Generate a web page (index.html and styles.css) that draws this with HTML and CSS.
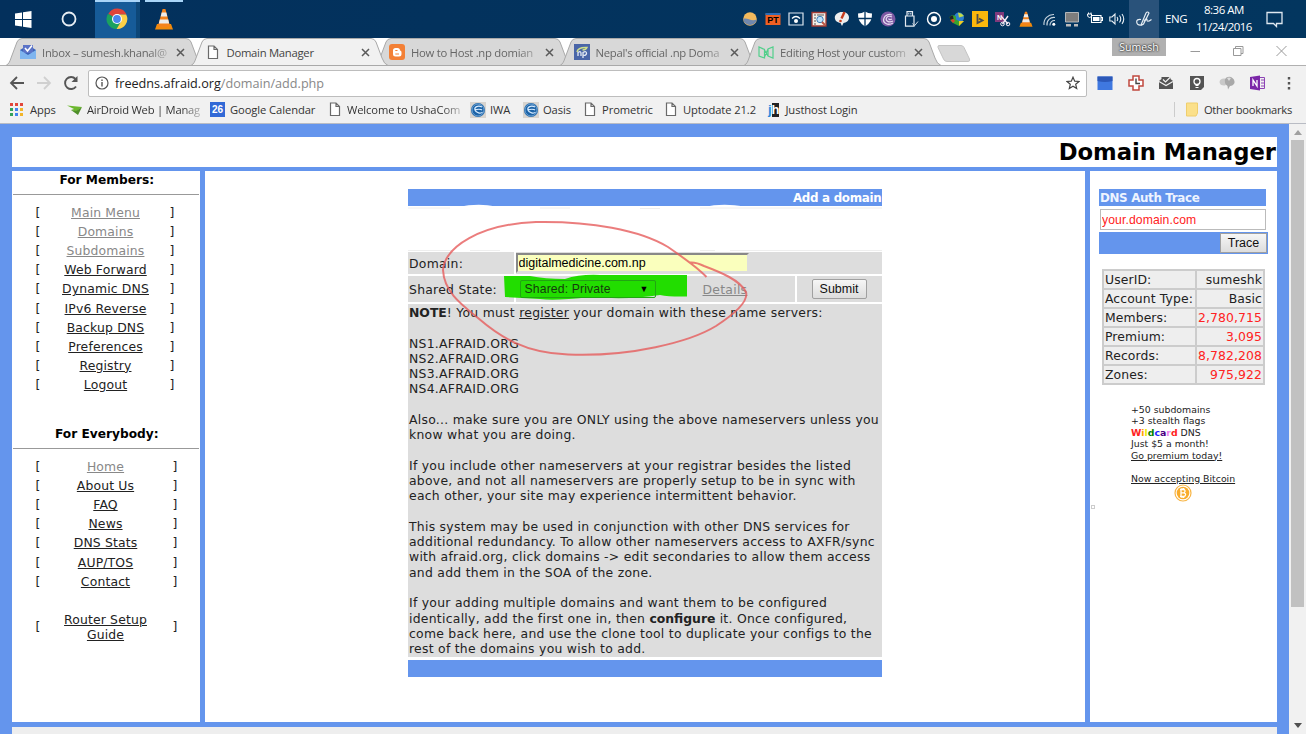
FILE: index.html
```html
<!DOCTYPE html>
<html lang="en">
<head>
  <meta charset="UTF-8">
  <meta name="viewport" content="width=device-width, initial-scale=1.0">
  <title>Domain Manager</title>
  <link rel="stylesheet" href="styles.css">
</head>
<body>

  <!-- shared shapes -->
  <svg class="defs" width="0" height="0">
    <symbol id="tab" viewBox="0 0 200 28"><path d="M1 27.5C4 26 5 23 6 20L12 4Q13.500 .5 17 .5H181Q184.500 .5 186 4L192 20Q194 26 198 27.500Z"/></symbol>
    <symbol id="page" viewBox="0 0 12 15"><path d="M1.500 1H7L10.500 4.500V13.500H1.500ZM7 1V4.500H10.500" fill="#fff" stroke="#6a6a6a" stroke-width="1.200"/></symbol>
    <symbol id="close" viewBox="0 0 9 9"><path d="M1 1L8 8M8 1L1 8" stroke="#5a5a5a" stroke-width="1.500"/></symbol>
    <symbol id="cone" viewBox="0 0 20 22">
      <path d="M3 16H17L19 21.500H1Z" fill="#f28a0c"/>
      <path d="M8.600 1H11.400L16 18Q10 20.500 4 18Z" fill="#f4831c"/>
      <path d="M7.700 4.500H12.300L13.300 8.500H6.700ZM5.800 11.500H14.200L15.200 15.500H4.800Z" fill="#ececec"/>
    </symbol>
    <symbol id="globe" viewBox="0 0 16 16">
      <path d="M0 0H16V16H0Z" fill="#d8d4cf"/><circle cx="8" cy="8" r="7" fill="#1d64a8"/>
      <circle cx="8" cy="8" r="6" fill="none" stroke="#7fb0dc" stroke-width=".8"/>
      <path d="M12 5C8 3 4 5 5 8S11 12 12.500 10M5 8C7 7 11 7 12 8" fill="none" stroke="#d9ecff" stroke-width="1.200"/>
    </symbol>
  </svg>

  <!-- Taskbar -->
  <div class="taskbar">
    <div class="start"><svg width="17" height="17" viewBox="0 0 17 17"><path d="M0 2.500L7 1.500V8H0ZM8 1.300L16.500 0V8H8ZM0 9H7V15.500L0 14.500ZM8 9H16.500V17L8 15.700Z" fill="#fff"/></svg></div>
    <div class="cortana"><svg width="16" height="16" viewBox="0 0 16 16"><circle cx="8" cy="8" r="6.500" fill="none" stroke="#e8eef4" stroke-width="1.800"/></svg></div>
    <div class="task task-active">
      <svg width="22" height="22" viewBox="0 0 22 22">
        <path d="M11 11L2.300 6A10 10 0 0 1 20.500 6.500H11Z" fill="#e0443a"/>
        <path d="M11 11L2 5.800A10 10 0 0 0 10.800 21L15 13Z" fill="#1ba15f"/>
        <path d="M11 11V6.500H20.200A10 10 0 0 1 10.600 21L15 13.500Z" fill="#fdd047"/>
        <circle cx="11" cy="11" r="5" fill="#fff"/><circle cx="11" cy="11" r="3.900" fill="#4a86ee"/>
      </svg>
    </div>
    <div class="task task-open"><svg width="20" height="22"><use href="#cone"/></svg></div>

    <div class="tray">
      <i><svg viewBox="0 0 16 16"><circle cx="8" cy="8" r="6.800" fill="#f3b95c"/><path d="M1.300 8C5 6 9 11 14.700 8.500A6.800 6.800 0 0 1 1.300 8Z" fill="#7088ae"/></svg></i>
      <i><svg viewBox="0 0 16 16"><path d="M.5 2.500H15.500V14H.5Z" fill="#ef6023"/><path d="M.5 2H15.500V4H.5Z" fill="#2d6cb5"/><text x="8" y="12.300" class="pt">PT</text></svg></i>
      <i><svg viewBox="0 0 16 16"><path d="M1 2H15V14H1Z" fill="none" stroke="#dce6ef" stroke-width="1.200"/><circle cx="8" cy="10" r="2" fill="#fff"/><path d="M4 7.500Q8 3.500 12 7.500" fill="none" stroke="#fff" stroke-width="1.300"/></svg></i>
      <i><svg viewBox="0 0 16 16"><path d="M1 1.500H15V15H1Z" fill="#f3efe8" stroke="#a33b33" stroke-width="1.300"/><path d="M3 4H5M6 4H13M3 7H5M3 10H5M3 13H5" stroke="#555"/><circle cx="9" cy="8.500" r="3.200" fill="#bfe2fa" stroke="#3f7fb8"/><path d="M11 11L14 14" stroke="#b54" stroke-width="2"/></svg></i>
      <i><svg viewBox="0 0 16 16"><path d="M8 1C12 1 15 3 15 6.500S12 11.500 9.500 12L8 15L6.500 12C3 11.500 .8 9.500 .8 6.500S4 1 8 1Z" fill="#eee"/><path d="M10.500 1L7.500 7.500" stroke="#c63c1e" stroke-width="2.400"/><circle cx="6.500" cy="10" r="1.300" fill="#c63c1e"/></svg></i>
      <i><svg viewBox="0 0 16 16"><path d="M8 .5Q11 2.500 15 2.500Q15.500 11 8 15.500Q.5 11 1 2.500Q5 2.500 8 .5Z" fill="#fff"/><path d="M8 0V16M0 7.500H16" stroke="#03345f" stroke-width="1.300"/></svg></i>
      <i><svg viewBox="0 0 16 16"><circle cx="8" cy="8" r="7.500" fill="#7c58a2"/><path d="M13 12C8 15 2 12 4 7C5 4 9 2.500 12 4M13 10C9 12 5 10 6.500 7C7.500 5 10 5 12 6M12 8C10 9 8.500 8.500 9 7.500" fill="none" stroke="#e4d9ef" stroke-width="1.300"/></svg></i>
      <i><svg viewBox="0 0 16 16"><path d="M4 .6H9.500V5H4ZM2.500 5H11V15.200H2.500Z" fill="none" stroke="#e4ebf2" stroke-width="1.200"/><path d="M5.800 2V3.500M7.800 2V3.500" stroke="#e4ebf2"/><path d="M9.500 12.500L11.500 14.800L15 10.500" fill="none" stroke="#cfdbe6"/></svg></i>
      <i><svg viewBox="0 0 16 16"><circle cx="8" cy="8" r="6.500" fill="none" stroke="#fff" stroke-width="1.400"/><circle cx="8" cy="8" r="3" fill="#fff"/></svg></i>
      <i><svg viewBox="0 0 16 16"><circle cx="10" cy="6.500" r="5" fill="#2c7fd0"/><path d="M9 1.500Q13 2 15 5L10 6.500Z" fill="#c4dd45"/><path d="M.5 6Q3 3 7 5.500L7 8.500L10 10H15L10 15L4 12Q1 10 .5 6Z" fill="#38a22e"/><path d="M.5 6Q1.500 4.500 4 4.500L4.500 8L1.500 9Z" fill="#222"/><path d="M1.500 9L4.500 8L6 10L4 12Z" fill="#d9402a"/><path d="M10 10H15L10 15Z" fill="#f0c929"/></svg></i>
      <i><svg viewBox="0 0 16 16"><path d="M0 0H16V16H0Z" fill="#fbb70c"/><path d="M5.500 3V12L10.500 9.500L7 7.500" fill="none" stroke="#4b4b4b" stroke-width="1.800"/></svg></i>
      <i><svg viewBox="0 0 16 16"><path d="M0 1H9V11H0Z" fill="#80397b"/><text x="4.500" y="8.500" class="nn">N</text><path d="M6 5L13 13M13 5L7.500 13" stroke="#f5e9f4" stroke-width="1.400"/><circle cx="7.500" cy="13" r="1.800" fill="none" stroke="#f5e9f4"/><circle cx="13" cy="13" r="1.800" fill="none" stroke="#f5e9f4"/></svg></i>
      <i><svg viewBox="0 0 20 22"><use href="#cone"/></svg></i>
      <i><svg viewBox="0 0 16 16"><path d="M3 14A9.500 9.500 0 0 1 13 3.500M6 14.500A7 7 0 0 1 14 6.500M9 14.500A4.500 4.500 0 0 1 14 9.500" fill="none" stroke="#c8d5e0" stroke-width="1.100"/><circle cx="12.800" cy="13.300" r="1.500" fill="#fff"/></svg></i>
      <i><svg viewBox="0 0 16 16"><path d="M1.500 1.500H14.500V11H1.500Z" fill="#7d7d7d" stroke="#cfcfcf" stroke-width=".8"/><path d="M2 13H7V15.500H2ZM10 13H14V15.500H10Z" fill="#bbb"/></svg></i>
      <i><svg viewBox="0 0 16 16"><path d="M4.500 4.500H14V11.500H4.500ZM14.500 6.500H15.500V9.500H14.500" fill="none" stroke="#fff" stroke-width="1.100"/><path d="M6 6H12.500V10H6Z" fill="#fff"/><path d="M.5 3H4.500V5.500Q2.500 7.500 .8 5.500ZM1.500 1.500V3M4 1.500V3" fill="#03345f" stroke="#fff"/></svg></i>
      <i><svg viewBox="0 0 16 16"><path d="M.8 6H3L6 3V13L3 10H.8ZM8 6Q9.500 8 8 10M10.500 4.500Q13 8 10.500 11.500M13 3Q16.500 8 13 13" fill="none" stroke="#e8eef4" stroke-width="1.100"/></svg></i>
      <i class="pen"><svg viewBox="0 0 16 16"><path d="M5 14L10 2Q11.500 0 13 2L7.500 13L5 14.500M5 8.500Q.5 8 .7 11Q1 14.500 5 14M8 10.500Q10 6.500 11 8.500Q10.500 12 15.500 8.500" fill="none" stroke="#e6edf3" stroke-width="1.200"/></svg></i>
      <span class="lang">ENG</span>
      <span class="clock">8:36 AM<br>11/24/2016</span>
      <svg class="action" viewBox="0 0 17 17"><path d="M1 1.500H16V12.500H10.500V15.500L7.500 12.500H1Z" fill="none" stroke="#dfe8f0" stroke-width="1.300"/></svg>
    </div>
  </div>

  <!-- Browser tabs -->
  <div class="tabs">
    <div class="tab">
      <svg class="tab-shape"><use href="#tab"/></svg>
      <svg class="fav" viewBox="0 0 16 16"><path d="M0 6L8 1L16 6V14H0Z" fill="#3c63b8"/><path d="M3 1H13V9H3Z" fill="#5b73c7"/><path d="M5 4L7.500 7L12 1.500" fill="none" stroke="#fff" stroke-width="1.600"/><path d="M0 6L8 11L16 6V15H0Z" fill="#7fb5ef"/></svg>
      <span class="tab-title fade">Inbox – sumesh.khanal@</span><svg class="close"><use href="#close"/></svg>
    </div>
    <div class="tab active">
      <svg class="tab-shape"><use href="#tab"/></svg>
      <svg class="fav doc"><use href="#page"/></svg>
      <span class="tab-title">Domain Manager</span><svg class="close"><use href="#close"/></svg>
    </div>
    <div class="tab">
      <svg class="tab-shape"><use href="#tab"/></svg>
      <svg class="fav" viewBox="0 0 16 16"><rect width="16" height="16" rx="3" fill="#f38036"/><path d="M4 6.500Q4 4 6.500 4H8.500Q11 4 11 6.500Q12.500 6.500 12.500 8.500V10Q12.500 12.500 10 12.500H6.500Q4 12.500 4 10Z" fill="#fff"/><path d="M6.300 6.500H8.500M6.300 10H10" stroke="#f38036" stroke-width="1.200"/></svg>
      <span class="tab-title fade">How to Host .np domian</span><svg class="close"><use href="#close"/></svg>
    </div>
    <div class="tab">
      <svg class="tab-shape"><use href="#tab"/></svg>
      <svg class="fav" viewBox="0 0 16 16"><path d="M0 0H16V16H0Z" fill="#4a66a8"/><path d="M3 8Q4 3 13 3.500Q12 6 8.500 6" fill="none" stroke="#cfe08a" stroke-width="1.400"/><path d="M4 12V8.500Q7 6.500 7 9.500V12M9 14V8.500Q12.500 6.500 12.500 9.500Q12 12 9 11" fill="none" stroke="#e6ecf5" stroke-width="1.300"/></svg>
      <span class="tab-title fade">Nepal's official .np Doma</span><svg class="close"><use href="#close"/></svg>
    </div>
    <div class="tab">
      <svg class="tab-shape"><use href="#tab"/></svg>
      <svg class="fav" viewBox="0 0 16 16"><path d="M1 3V12L6.500 14V5.500ZM6.500 6L10 12L15 14V3L10 5L6.500 13M10 5V12" fill="none" stroke="#52cf8b" stroke-width="1.200"/></svg>
      <span class="tab-title fade">Editing Host your custom</span><svg class="close"><use href="#close"/></svg>
    </div>
    <svg class="new-tab" viewBox="0 0 34 17"><path d="M2 .5H24Q26 .5 27 2.500L32.500 14Q33.500 16.500 31 16.500H10Q7.500 16.500 6.500 14L1 2.500Q.5 .5 2 .5Z" fill="#d8d8d8" stroke="#c4c4c4"/></svg>
    <div class="window-controls">
      <span class="user">Sumesh</span>
      <svg width="11" height="12" viewBox="0 0 11 12"><path d="M.5 6.500H10" stroke="#999"/></svg>
      <svg width="11" height="12" viewBox="0 0 11 12"><path d="M.5 3.500H8V10.500H.5ZM2.500 3.500V1.500H10V8.500H8" fill="none" stroke="#999"/></svg>
      <svg width="11" height="12" viewBox="0 0 11 12"><path d="M.5 1L10.500 11M10.500 1L.5 11" stroke="#999"/></svg>
    </div>
  </div>

  <!-- Address bar -->
  <div class="toolbar">
    <svg class="nav" viewBox="0 0 16 16"><path d="M15 8H2M8 2L2 8L8 14" fill="none" stroke="#555" stroke-width="1.800"/></svg>
    <svg class="nav" viewBox="0 0 16 16"><path d="M1 8H14M8 2L14 8L8 14" fill="none" stroke="#d0d0d0" stroke-width="1.800"/></svg>
    <svg class="nav" viewBox="0 0 16 16"><path d="M13 11.500A6 6 0 1 1 12.500 4" fill="none" stroke="#555" stroke-width="1.900"/><path d="M14.500 1V7H8.500Z" fill="#555"/></svg>
    <div class="omnibox">
      <svg width="14" height="14" viewBox="0 0 14 14"><circle cx="7" cy="7" r="6" fill="none" stroke="#555" stroke-width="1.200"/><path d="M7 6V10.500M7 3.500V5" stroke="#555" stroke-width="1.400"/></svg>
      <span class="url">freedns.afraid.org<em>/domain/add.php</em></span>
      <svg class="star" width="14" height="14" viewBox="0 0 14 14"><path d="M7 1.200L8.700 5.200L13 5.500L9.700 8.300L10.700 12.600L7 10.300L3.300 12.600L4.300 8.300L1 5.500L5.300 5.200Z" fill="none" stroke="#444" stroke-width="1.200"/></svg>
    </div>
    <div class="extensions">
      <svg viewBox="0 0 16 16"><path d="M.5 1.500H15.500V15H.5Z" fill="#3f78e0"/><path d="M.5 1.500H15.500V6Q8 8 .5 6Z" fill="#2c58b8"/></svg>
      <svg viewBox="0 0 16 16"><path d="M5 1H11V5H15V11H11V15H5V11H1V5H5Z" fill="#fff" stroke="#c0483e" stroke-width="1.500"/><path d="M8 3.500V8.500H12" fill="none" stroke="#444" stroke-width="1.400"/></svg>
      <svg viewBox="0 0 16 16"><path d="M1 6L3.500 4V2H12.500V4L15 6V14H1Z" fill="#555"/><path d="M1 6.500L8 10.500L15 6.500M5 4.500L7.500 7L13 1.500" fill="none" stroke="#f1f1f1" stroke-width="1.200"/></svg>
      <svg viewBox="0 0 16 16"><path d="M1 1H15V12L12 15H1Z" fill="#545454"/><circle cx="8" cy="6.500" r="3" fill="none" stroke="#fff" stroke-width="1.300"/><path d="M6.500 10.500H9.500M6.500 12.500H9.500" stroke="#fff" stroke-width="1.200"/></svg>
      <svg viewBox="0 0 16 16"><path d="M.5 7Q1 3 6 3.500L8 9L6 10.500Q1 11 .5 7Z" fill="#c9c9c9"/><path d="M6 4Q8 1 12 2Q16 4 15.500 8Q14 11 11 11L9 14.500L8.500 11Q5 9 6 4Z" fill="#a9a9a9"/><path d="M8 3Q10 2 12 3L10 6Z" fill="#ddd"/></svg>
      <svg viewBox="0 0 16 16"><path d="M0 2L10 .5V15.500L0 14Z" fill="#7b27a8"/><path d="M10 2.500H14.500V13.500H10M11 5H14M11 8H14M11 11H14" fill="none" stroke="#8c44b5"/><path d="M3 11V5L7 11V5" fill="none" stroke="#fff" stroke-width="1.300"/></svg>
      <svg viewBox="0 0 16 16"><path d="M6.800 2H9.200V4.500H6.800ZM6.800 7H9.200V9.500H6.800ZM6.800 12H9.200V14.500H6.800Z" fill="#555"/></svg>
    </div>
  </div>

  <!-- Bookmarks -->
  <div class="bookmarks">
    <span class="bm apps"><svg width="13" height="13" viewBox="0 0 13 13"><path d="M0 0H3V3H0ZM5 0H8V3H5ZM10 0H13V3H10Z" fill="#e2473b"/><path d="M0 5H3V8H0ZM0 10H3V13H0Z" fill="#34a159"/><path d="M5 5H8V8H5ZM5 10H8V13H5Z" fill="#4384ef"/><path d="M10 5H13V8H10ZM10 10H13V13H10Z" fill="#f2b52a"/></svg>Apps</span>
    <span class="bm airdroid"><svg width="16" height="12" viewBox="0 0 16 12"><path d="M0 1.500L15 3L9 7.500L4 6L7 5Z" fill="#6cb82f"/><path d="M4 6L9 7L15 3L11 11Z" fill="#4f8f2a"/></svg><b class="fade">AirDroid Web | Manag</b></span>
    <span class="bm calendar"><b class="cal">26</b>Google Calendar</span>
    <span class="bm usha"><svg width="12" height="15"><use href="#page"/></svg><b class="fade">Welcome to UshaCom</b></span>
    <span class="bm iwa"><svg width="16" height="16"><use href="#globe"/></svg>IWA</span>
    <span class="bm oasis"><svg width="16" height="16"><use href="#globe"/></svg>Oasis</span>
    <span class="bm prometric"><svg width="12" height="15"><use href="#page"/></svg>Prometric</span>
    <span class="bm uptodate"><svg width="12" height="15"><use href="#page"/></svg>Uptodate 21.2</span>
    <span class="bm justhost"><span class="jh"><i>j</i><i>h</i></span>Justhost Login</span>
    <span class="bm other"><svg width="12" height="15" viewBox="0 0 12 15"><path d="M.5 1H11.500V11L10 14H.5Z" fill="#fbe08a" stroke="#efce6d"/></svg>Other bookmarks</span>
  </div>

  <!-- Web page -->
  <div class="viewport">
    <div class="site">
      <header class="site-title">Domain Manager</header>
      <div class="columns">

        <aside class="menu">
          <h4>For Members:</h4>
          <hr>
          <ul class="members">
            <li><a class="seen">Main Menu</a></li>
            <li><a class="seen">Domains</a></li>
            <li><a class="seen">Subdomains</a></li>
            <li><a>Web Forward</a></li>
            <li><a>Dynamic DNS</a></li>
            <li><a>IPv6 Reverse</a></li>
            <li><a>Backup DNS</a></li>
            <li><a>Preferences</a></li>
            <li><a>Registry</a></li>
            <li><a>Logout</a></li>
          </ul>
          <h4>For Everybody:</h4>
          <hr>
          <ul class="everybody">
            <li><a class="seen">Home</a></li>
            <li><a>About Us</a></li>
            <li><a>FAQ</a></li>
            <li><a>News</a></li>
            <li><a>DNS Stats</a></li>
            <li><a>AUP/TOS</a></li>
            <li><a>Contact</a></li>
            <li class="router"><a>Router Setup<br>Guide</a></li>
          </ul>
        </aside>

        <main class="content">
          <div class="panel">
            <div class="panel-title">Add a domain</div>
            <div class="row row-domain">
              <div class="label">Domain:</div>
              <div class="cell"><input class="domain-input" type="text" value="digitalmedicine.com.np"></div>
            </div>
            <div class="row row-state">
              <div class="label">Shared State:</div>
              <div class="cell state"><span class="select">Shared: Private<i>▼</i></span><a class="seen">Details</a></div>
              <div class="cell send"><button class="submit">Submit</button></div>
            </div>
            <div class="note">
              <p><b>NOTE</b>! You must <a>register</a> your domain with these name servers:</p>
              <p>NS1.AFRAID.ORG<br>NS2.AFRAID.ORG<br>NS3.AFRAID.ORG<br>NS4.AFRAID.ORG</p>
              <p>Also... make sure you are ONLY using the above nameservers unless you<br>know what you are doing.</p>
              <p>If you include other nameservers at your registrar besides the listed<br>above, and not all nameservers are properly setup to be in sync with<br>each other, your site may experience intermittent behavior.</p>
              <p>This system may be used in conjunction with other DNS services for<br>additional redundancy. To allow other nameservers access to AXFR/sync<br>with afraid.org, click domains -&gt; edit secondaries to allow them access<br>and add them in the SOA of the zone.</p>
              <p>If your adding multiple domains and want them to be configured<br>identically, add the first one in, then <b>configure</b> it. Once configured,<br>come back here, and use the clone tool to duplicate your configs to the<br>rest of the domains you wish to add.</p>
            </div>
            <div class="panel-foot"></div>

            <!-- pen marks drawn over the form -->
            <svg class="marker" viewBox="408 189 474 180">
              <path d="M504 276H530Q545 279 565 279Q580 274 600 275H687V296.500Q670 297 660 295Q630 300 590 297Q555 301 540 299L505 297Z" fill="#22dd00"/>
            </svg>
            <svg class="ink" viewBox="408 189 474 180">
              <path d="M458 207Q478 203 496 206.500H458ZM704 207Q722 203 745 206.500Z" fill="#fff"/>
              <path d="M408 208H450M540 208H570M640 208.500H660M700 208H882M408 250.500H452M470 250.500H500M700 250.500H715M730 250.500H882" stroke="#eee"/>
              <path d="M706.500 277C698 268 684 258 668 247C640 230 590 221 536 222C480 224 445 247 443 270C444 292 462 305 478 318C500 337 525 353 568 354.500C630 357 690 342 716 326C742 309 748 299 746 292C740 280 720 272 704 266Q696 262 690 262.500" fill="none" stroke="#e65c5c" stroke-width="2" stroke-opacity=".8"/>
            </svg>
          </div>
        </main>

        <aside class="side">
          <div class="trace-title">DNS Auth Trace</div>
          <input class="trace-input" type="text" value="your.domain.com">
          <div class="trace-bar"><button>Trace</button></div>
          <table class="stats">
            <tr><td>UserID:</td><td>sumeshk</td></tr>
            <tr><td>Account Type:</td><td>Basic</td></tr>
            <tr><td>Members:</td><td class="num">2,780,715</td></tr>
            <tr><td>Premium:</td><td class="num">3,095</td></tr>
            <tr><td>Records:</td><td class="num">8,782,208</td></tr>
            <tr><td>Zones:</td><td class="num">975,922</td></tr>
          </table>
          <div class="promo">
            +50 subdomains<br>+3 stealth flags<br>
            <b><span class="c1">W</span><span class="c2">i</span><span class="c3">l</span><span class="c4">d</span><span class="c5">c</span><span class="c6">a</span><span class="c7">r</span><span class="c1">d</span></b> DNS<br>
            Just $5 a month!<br><a>Go premium today!</a><br><br>
            <a>Now accepting Bitcoin</a>
            <svg width="18" height="18" viewBox="0 0 18 18"><circle cx="9" cy="9" r="8" fill="#fff" stroke="#f8b545" stroke-width="1.200"/><circle cx="9" cy="9" r="6.300" fill="#f9ac2b"/><path d="M7 5.500V12.500M6 5.500H9.500Q11.300 5.800 11 7.300Q10.800 8.800 9.500 8.900H7M9.500 8.900Q11.800 9 11.600 10.800Q11.400 12.500 9.500 12.500H6M8 4V5.500M9.700 4V5.500M8 12.500V14M9.700 12.500V14" fill="none" stroke="#fff" stroke-width="1.300"/></svg>
          </div>
          <div class="dot"></div>
        </aside>

      </div>
      <footer class="site-foot"></footer>
    </div>
    <div class="scrollbar">
      <svg width="8" height="5" viewBox="0 0 8 5"><path d="M0 5L4 0L8 5Z" fill="#a0a0a0"/></svg>
      <div class="thumb"></div>
      <svg width="8" height="5" viewBox="0 0 8 5"><path d="M0 0L4 5L8 0Z" fill="#505050"/></svg>
    </div>
  </div>

</body>
</html>
```
FILE: styles.css
```css
* {
  margin: 0;
  padding: 0;
  box-sizing: border-box;
}

body {
  width: 1306px;
  height: 734px;
  overflow: hidden;
  background: #fff;
  font-family: "Open Sans", "Noto Sans", sans-serif;
  font-size: 11.5px;
  color: #333;
}

i, em {
  font-style: normal;
}

svg {
  display: block;
  flex: none;
}

.defs {
  position: absolute;
}

.fade {
  -webkit-mask-image: linear-gradient(90deg, #000 84%, rgba(0, 0, 0, .3));
  mask-image: linear-gradient(90deg, #000 84%, rgba(0, 0, 0, .3));
}

/* Taskbar */
.taskbar {
  display: flex;
  height: 38px;
  background: linear-gradient(90deg, #03305c, #03365f);
}

.start {
  padding: 11px 0 0 15px;
  width: 61px;
}

.cortana {
  padding-top: 11px;
  width: 34px;
}

.task {
  display: flex;
  justify-content: center;
  padding-top: 6px;
  border-top: 2px solid #a9d5f8;
}

.task-active {
  width: 45px;
  padding-right: 1px;
  background: linear-gradient(90deg, #165b98 41px, #0d4778 41px);
}

.task-open {
  width: 38px;
  margin-left: 5px;
}

.tray {
  display: flex;
  align-items: center;
  margin-left: auto;
  width: 567px;
  color: #fff;
}

.tray i {
  flex: none;
  width: 22.95px;
  height: 38px;
  display: flex;
  align-items: center;
  justify-content: center;
}

.tray i svg {
  width: 16px;
  height: 16px;
}

.tray .pen {
  width: 30px;
  background: #29527a;
}

.pt {
  font: bold 9px "Liberation Sans", sans-serif;
  text-anchor: middle;
  fill: #000;
}

.nn {
  font: bold 7px "Liberation Sans", sans-serif;
  text-anchor: middle;
  fill: #fff;
}

.lang {
  margin: -1px 0 0 6px;
  width: 28px;
  letter-spacing: -.4px;
}

.clock {
  width: 62px;
  margin-top: -2px;
  text-align: center;
  line-height: 17px;
  letter-spacing: -.5px;
}

.action {
  width: 17px;
  height: 17px;
  margin-left: 11px;
}

/* Tabs */
.tabs {
  display: flex;
  height: 28px;
  padding-left: 5px;
  border-bottom: 1px solid #b0b0b0;
}

.tab {
  position: relative;
  flex: none;
  display: flex;
  align-items: center;
  width: 200px;
  height: 28px;
  margin-right: -15.5px;
  padding-left: 15px;
  color: #666;
}

.tab-shape {
  position: absolute;
  left: 0;
  top: 0;
  width: 200px;
  height: 28px;
  fill: #d8d8d8;
  stroke: #a9a9a9;
}

.tab.active {
  z-index: 1;
  color: #444;
}

.active .tab-shape {
  fill: #f1f1f1;
}

.fav {
  position: relative;
  width: 16px;
  height: 16px;
}

.fav.doc {
  width: 12px;
  height: 15px;
  margin: 0 2px;
}

.tab-title {
  position: relative;
  width: 127px;
  margin-left: 6px;
  font-size: 11.3px;
  letter-spacing: -.28px;
  white-space: nowrap;
}

.close {
  position: relative;
  width: 9px;
  height: 9px;
  margin-left: 7px;
}

.new-tab {
  width: 34px;
  height: 17px;
  margin: 7px 0 0 9px;
}

.window-controls {
  display: flex;
  gap: 32px;
  margin-left: auto;
  padding: 7px 19px 0 0;
}

.user {
  width: 54px;
  height: 18px;
  margin: -7px -8px 0 0;
  background: #b0b0b0;
  color: #fff;
  font-size: 10.5px;
  line-height: 18px;
  text-align: center;
  text-shadow: 0 0 2px #222, 0 0 2px #222;
}

/* Address bar */
.toolbar {
  display: flex;
  align-items: center;
  height: 32px;
  padding-left: 9px;
  padding-top: 2px;
  background: #f1f1f1;
}

.nav {
  width: 16px;
  height: 16px;
  margin-right: 11px;
}

.omnibox {
  display: flex;
  align-items: center;
  width: 999px;
  height: 27px;
  margin-left: -2px;
  padding: 0 6px;
  background: #fff;
  border: 1px solid #bdbdbd;
  border-radius: 2px;
}

.url {
  margin-left: 6px;
  font-size: 12.65px;
  color: #222;
}

.url em {
  color: #888;
}

.star {
  margin-left: auto;
}

.extensions {
  display: flex;
  gap: 14.6px;
  margin-left: 10px;
}

.extensions svg {
  width: 16px;
  height: 16px;
}

/* Bookmarks */
.bookmarks {
  display: flex;
  height: 26px;
  padding: 0 14px 2px 10px;
  background: #f1f1f1;
  border-bottom: 1px solid #b9bcc4;
  font-size: 11.2px;
  letter-spacing: -.08px;
}

.bm {
  display: flex;
  align-items: center;
  gap: 6px;
  flex: none;
  white-space: nowrap;
}

.bm b {
  font-weight: normal;
}

.apps { width: 57px; gap: 7px; }
.airdroid { width: 143px; gap: 4px; }
.airdroid b { width: 113px; letter-spacing: -.22px; }
.calendar { width: 119px; gap: 5px; }
.usha { width: 141px; }
.usha b { width: 113px; letter-spacing: -.12px; }
.iwa { width: 53px; gap: 4px; }
.oasis { width: 61px; gap: 4px; }
.prometric { width: 81px; }
.uptodate { width: 103px; }
.justhost { gap: 6px; }

.other {
  margin-left: auto;
  padding-left: 11px;
  letter-spacing: -.25px;
}

.other::before {
  content: "";
  width: 1px;
  height: 15px;
  margin: 0 5px 0 -12px;
  background: #ccc;
}

.bm .cal {
  width: 15px;
  height: 15px;
  background: #3269d6;
  color: #fff;
  font: bold 10px/15px "Liberation Sans", sans-serif;
  text-align: center;
}

.jh {
  display: flex;
  font: bold 13px/14px "Liberation Sans", sans-serif;
  color: #2b8bdc;
}

.jh i + i {
  background: #222;
  color: #fff;
}

/* Web page */
.viewport {
  display: flex;
  height: 610px;
  font-family: "DejaVu Sans", Verdana, sans-serif;
  font-size: 12.4px;
  color: #222;
}

.site {
  width: 1289px;
  padding: 13px 12px 0 12px;
  background: #6495ed;
}

.site-title {
  height: 29.5px;
  background: #fff;
  color: #000;
  font-size: 22.7px;
  font-weight: bold;
  line-height: 30px;
  text-align: right;
  padding-right: 1px;
}

.columns {
  display: grid;
  grid-template-columns: 187.5px 880px 187.5px;
  gap: 5px;
  height: 551px;
  margin-top: 4.5px;
}

.columns > * {
  background: #fff;
}

a {
  color: #222;
  text-decoration: underline;
}

a.seen {
  color: #888;
}

hr {
  margin: 0 1px;
  border: 0;
  border-top: 1px solid #999;
}

/* Left menu */
.menu h4 {
  padding: 1px 0 0 2px;
  height: 23px;
  line-height: 16px;
  color: #000;
  font-size: 12.2px;
  text-align: center;
}

.menu ul {
  list-style: none;
  padding: 8.2px 0 0 23px;
}

.menu li {
  display: grid;
  grid-template-columns: 6px 1fr 6px;
  align-items: center;
  height: 19.1px;
  line-height: 15.3px;
  letter-spacing: .15px;
  text-align: center;
}

.menu li::before {
  content: "[";
}

.menu li::after {
  content: "]";
}

.members {
  width: 163px;
  height: 230px;
}

.everybody {
  width: 166px;
}

.members a {
  margin-right: -1px;
}

.everybody a {
  margin-right: 2px;
}

.menu .router {
  height: 31px;
  margin-top: 20.5px;
}

/* Add a domain form */
.content {
  padding: 18px 0 0 203px;
}

.panel {
  position: relative;
  width: 474px;
  letter-spacing: .27px;
  white-space: nowrap;
}

.panel-title {
  height: 17px;
  margin-bottom: 46px;
  background: #6495ed;
  color: #fff;
  font-weight: bold;
  font-size: 11.9px;
  letter-spacing: -.3px;
  line-height: 18px;
  text-align: right;
}

.row {
  display: grid;
  gap: 2px;
  margin-bottom: 2px;
}

.row > div {
  display: flex;
  align-items: center;
  background: #ddd;
}

.row-domain {
  grid-template-columns: 106px 1fr;
  height: 22px;
}

.row-state {
  grid-template-columns: 106px 279px 1fr;
  height: 26px;
}

.row .label {
  padding-left: 1.5px;
}

.domain-input {
  width: 233px;
  height: 20px;
  padding-left: 1px;
  background: #faffbd;
  border: 2px solid;
  border-color: #888 #ddd #ddd #888;
  font: 12.5px "Liberation Sans", sans-serif;
}

.select {
  z-index: 1;
  display: flex;
  align-items: center;
  width: 136px;
  height: 18px;
  margin: 0 47px 0 4px;
  padding: 0 6px 0 4px;
  border: 1px solid #21a512;
  border-radius: 2px;
  color: #143c0c;
  font: 12.2px "Liberation Sans", sans-serif;
  letter-spacing: .15px;
}

.select i {
  margin-left: auto;
  color: #000;
  font-size: 9px;
}

.row .send {
  justify-content: center;
}

button {
  height: 20px;
  background: linear-gradient(#f6f6f6, #ddd);
  border: 1px solid #a0a0a0;
  border-radius: 2px;
  font: 12.5px "Liberation Sans", sans-serif;
  color: #111;
}

.submit {
  width: 55px;
}

.note {
  height: 353px;
  padding: 1px 0 0 1.5px;
  background: #ddd;
  line-height: 15.28px;
}

.note b {
  letter-spacing: 0;
}

.note p {
  margin-bottom: 15.28px;
}

.panel-foot {
  height: 17px;
  margin-top: 3px;
  background: #6495ed;
}

.marker, .ink {
  position: absolute;
  left: 0;
  top: 0;
  width: 474px;
  height: 180px;
}

.ink {
  z-index: 2;
}

/* Right column */
.side {
  padding: 18px 0 0 9.5px;
}

.trace-title {
  width: 167px;
  height: 17px;
  padding-left: 1px;
  background: #6495ed;
  color: #eef4ff;
  font-size: 11.9px;
  font-weight: bold;
  letter-spacing: -.35px;
  line-height: 18px;
}

.trace-input {
  display: block;
  width: 166px;
  height: 21px;
  margin: 3px 0 2px 1px;
  padding-left: 1px;
  border: 1px solid #bbb;
  color: #f22;
  font: 12.2px "Liberation Sans", sans-serif;
  letter-spacing: .1px;
}

.trace-bar {
  display: flex;
  justify-content: flex-end;
  width: 169px;
  height: 22px;
  padding: 1px 1px 0 0;
  background: #6495ed;
}

.trace-bar button {
  width: 47px;
  border-radius: 0;
}

.stats {
  width: 163px;
  margin: 14.5px 0 0 3px;
  border: 1px solid #ccc;
  border-collapse: collapse;
  letter-spacing: .1px;
  white-space: nowrap;
}

.stats td {
  height: 19.1px;
  padding: 0 1px;
  background: #eee;
  border: 2px solid #ccc;
  line-height: 15px;
}

.stats td + td {
  width: 67px;
  text-align: right;
}

.stats .num {
  color: #f22;
}

.promo {
  margin: 18.5px 0 0 32px;
  font-size: 9.35px;
  line-height: 11.5px;
  white-space: nowrap;
}

.promo svg {
  margin-left: 43px;
}

.c1 { color: #f22; }
.c2 { color: orange; }
.c3 { color: #ee0; }
.c4 { color: green; }
.c5 { color: #22f; }
.c6 { color: indigo; }
.c7 { color: violet; }

.dot {
  width: 4px;
  height: 4px;
  margin: 3px 0 0 -8px;
  border: 1px solid #ccc;
}

.site-foot {
  height: 7px;
  margin-top: 5px;
  background: #eee;
}

/* Scrollbar */
.scrollbar {
  display: flex;
  flex-direction: column;
  align-items: center;
  width: 17px;
  padding: 6px 0;
  background: #f1f1f1;
}

.thumb {
  width: 13px;
  height: 467px;
  margin: 5px 0 auto;
  background: #c1c1c1;
}
```
